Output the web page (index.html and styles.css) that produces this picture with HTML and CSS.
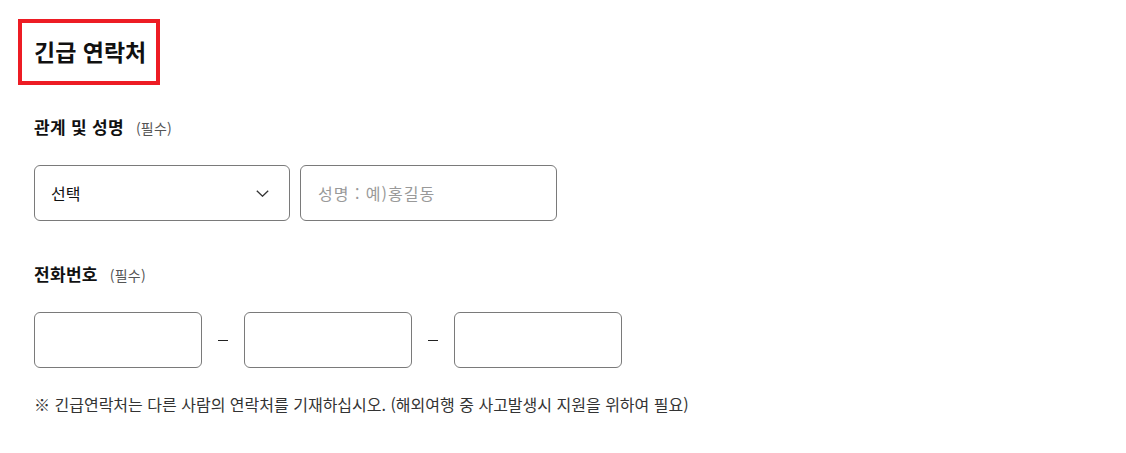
FILE: index.html
```html
<!DOCTYPE html>
<html lang="ko">
<head>
    <meta charset="UTF-8">
    <meta name="viewport" content="width=device-width, initial-scale=1.0">
    <title>긴급 연락처</title>
    <link rel="stylesheet" href="styles.css">
</head>
<body>
    <section class="contact">
        <h2 class="title">긴급 연락처</h2>

        <div class="field first">
            <p class="label">관계 및 성명 <span class="required">(필수)</span></p>
            <div class="row">
                <div class="select">
                    <span>선택</span>
                    <svg class="arrow" width="13" height="7" viewBox="0 0 13 7">
                        <polyline points="0.8,0.8 6.5,6.2 12.2,0.8" fill="none" stroke="#333" stroke-width="1.3"/>
                    </svg>
                </div>
                <input class="input name" type="text" placeholder="성명 : 예)홍길동">
            </div>
        </div>

        <div class="field">
            <p class="label">전화번호 <span class="required">(필수)</span></p>
            <div class="row phone">
                <input class="input tel" type="text">
                <span class="dash"></span>
                <input class="input tel" type="text">
                <span class="dash"></span>
                <input class="input tel" type="text">
            </div>
        </div>

        <p class="note">※ 긴급연락처는 다른 사람의 연락처를 기재하십시오. (해외여행 중 사고발생시 지원을 위하여 필요)</p>
    </section>
</body>
</html>
```

FILE: styles.css
```css
* {
    margin: 0;
    padding: 0;
    box-sizing: border-box;
}
body {
    font-family: "Noto Sans CJK KR", "Noto Sans", sans-serif;
    color: #111;
    background: #fff;
}
.contact {
    padding: 19px 0 0 34px;
}
.title {
    display: inline-block;
    margin-left: -16px;
    height: 66px;
    line-height: 56px;
    padding: 0 10px 0 12px;
    border: 4px solid #ed1c24;
    font-size: 23px;
    font-weight: 700;
}
.field {
    margin-top: 41px;
}
.field.first {
    margin-top: 30px;
}
.label {
    height: 24px;
    line-height: 24px;
    font-size: 17px;
    font-weight: 700;
    letter-spacing: 0.3px;
    margin-bottom: 26px;
}
.required {
    margin-left: 7px;
    font-size: 14px;
    font-weight: 400;
    letter-spacing: 0.2px;
    color: #555;
}
.row {
    display: flex;
    align-items: center;
}
.select {
    width: 256px;
    height: 56px;
    border: 1px solid #7a7a7a;
    border-radius: 6px;
    display: flex;
    align-items: center;
    justify-content: space-between;
    padding: 0 20px 0 16px;
    font-size: 16px;
    color: #111;
}
.arrow {
    display: block;
}
.input {
    height: 56px;
    border: 1px solid #7a7a7a;
    border-radius: 6px;
    padding: 0 17px;
    font-family: inherit;
    font-size: 16px;
    outline: none;
}
.input::placeholder {
    color: #999;
    letter-spacing: 1px;
}
.name {
    width: 257px;
    margin-left: 10px;
}
.phone {
    margin-top: 1px;
}
.tel {
    width: 168px;
}
.dash {
    display: block;
    width: 10px;
    height: 1px;
    background: #222;
    margin: 0 16px;
}
.note {
    margin-top: 25px;
    line-height: 22px;
    font-size: 16px;
    color: #333;
}
```
